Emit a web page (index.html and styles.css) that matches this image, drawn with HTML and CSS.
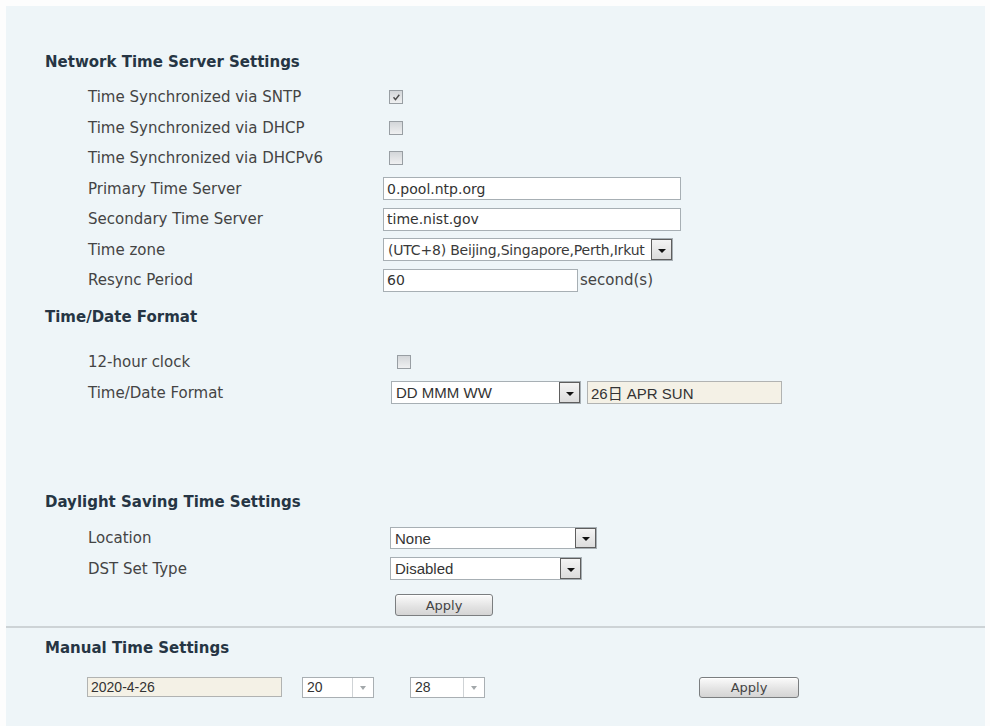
FILE: index.html
```html
<!DOCTYPE html>
<html>
<head>
<meta charset="utf-8">
<title>Time &amp; Date</title>
<link rel="stylesheet" href="styles.css">
</head>
<body>
<div class="panel">
  <section class="sec sec-ntp">
    <h2 class="sec-title">Network Time Server Settings</h2>
    <div class="row">
      <span class="label">Time Synchronized via SNTP</span>
      <span class="cb cb-ntp"><svg viewBox="0 0 13 13" width="11" height="11"><path d="M3 6.2 L5.3 9 L9.8 3.2" fill="none" stroke="#4a4a4a" stroke-width="1.7"/></svg></span>
    </div>
    <div class="row">
      <span class="label">Time Synchronized via DHCP</span>
      <span class="cb cb-ntp"></span>
    </div>
    <div class="row">
      <span class="label">Time Synchronized via DHCPv6</span>
      <span class="cb cb-ntp"></span>
    </div>
    <div class="row">
      <span class="label">Primary Time Server</span>
      <input class="tb tb-wide" type="text" value="0.pool.ntp.org">
    </div>
    <div class="row">
      <span class="label">Secondary Time Server</span>
      <input class="tb tb-wide" type="text" value="time.nist.gov">
    </div>
    <div class="row">
      <span class="label">Time zone</span>
      <div class="sel sel-tz"><span class="sel-val tz-val">(UTC+8) Beijing,Singapore,Perth,Irkut</span><span class="arr"><i class="tri"></i></span></div>
    </div>
    <div class="row">
      <span class="label">Resync Period</span>
      <input class="tb tb-mid" type="text" value="60"><span class="unit">second(s)</span>
    </div>
  </section>

  <section class="sec sec-fmt">
    <h2 class="sec-title">Time/Date Format</h2>
    <div class="row">
      <span class="label">12-hour clock</span>
      <span class="cb cb-fmt"></span>
    </div>
    <div class="row">
      <span class="label">Time/Date Format</span>
      <div class="sel sel-fmt"><span class="sel-val narrow">DD MMM WW</span><span class="arr"><i class="tri"></i></span></div>
      <input class="tb tb-ro tb-fmt narrow" type="text" value="26日 APR SUN" readonly>
    </div>
  </section>

  <section class="sec sec-dst">
    <h2 class="sec-title">Daylight Saving Time Settings</h2>
    <div class="row">
      <span class="label">Location</span>
      <div class="sel sel-loc"><span class="sel-val narrow">None</span><span class="arr"><i class="tri"></i></span></div>
    </div>
    <div class="row">
      <span class="label">DST Set Type</span>
      <div class="sel sel-dst"><span class="sel-val narrow">Disabled</span><span class="arr"><i class="tri"></i></span></div>
    </div>
    <div class="row-btn">
      <button class="btn btn-dst" type="button">Apply</button>
    </div>
  </section>

  <div class="divider"></div>

  <section class="sec sec-man">
    <h2 class="sec-title">Manual Time Settings</h2>
    <div class="row-man">
      <input class="tb tb-ro tb-date narrow" type="text" value="2020-4-26" readonly>
      <div class="msel msel-h"><span class="sel-val narrow">20</span><span class="marr"><i class="mtri"></i></span></div>
      <div class="msel msel-m"><span class="sel-val narrow">28</span><span class="marr"><i class="mtri"></i></span></div>
      <button class="btn btn-man" type="button">Apply</button>
    </div>
  </section>
</div>
</body>
</html>
```

FILE: styles.css
```css
* { box-sizing: border-box; }

html, body {
  margin: 0;
  padding: 0;
  background: #fdfdfd;
}

body {
  font-family: "DejaVu Sans", "Noto Sans CJK SC", sans-serif;
  color: #3c3c3c;
  height: 726px;
  overflow: hidden;
}

.panel {
  margin: 6px 5px 0 6px;
  height: 720px;
  background: #eef5f8;
  padding-top: 46px;
}

.sec {
  padding-left: 39px;
}

.sec-title {
  margin: 0;
  font-size: 15px;
  line-height: 20px;
  font-weight: bold;
  color: #263544;
}

.sec-ntp .sec-title { margin-bottom: 10px; }
.sec-fmt { margin-top: 11.5px; }
.sec-fmt .sec-title { margin-bottom: 20px; }
.sec-dst { margin-top: 84px; }
.sec-dst .sec-title { margin-bottom: 11px; }
.sec-man { margin-top: 10px; }
.sec-man .sec-title { margin-bottom: 14px; }

.row {
  display: flex;
  align-items: center;
  height: 30.5px;
  padding-left: 43px;
}

.label {
  flex: none;
  width: 295px;
  font-size: 15px;
  color: #444;
  white-space: nowrap;
}

/* checkbox */
.cb {
  flex: none;
  width: 14px;
  height: 14px;
  border: 1px solid #989ea3;
  background: linear-gradient(#d3d6d9, #eff0f1);
  display: flex;
  align-items: center;
  justify-content: center;
}
.cb-ntp { margin-left: 6px; }
.cb-fmt { margin-left: 14px; }

/* text boxes */
.tb {
  flex: none;
  height: 23px;
  margin: 0;
  border: 1px solid #a7afb4;
  background: #fff;
  font-family: "DejaVu Sans", "Noto Sans CJK SC", sans-serif;
  font-size: 14px;
  color: #333;
  padding: 0 3px;
  outline: none;
}
.tb-wide { width: 298px; }
.tb-mid { width: 195px; }
.tb-ro {
  background: #f4f1e6;
  border-color: #b1b3b2;
}
.tb-fmt {
  width: 195px;
  margin-left: 6px;
}

.narrow {
  font-family: "Liberation Sans Narrow", "Liberation Sans", "Noto Sans CJK SC", sans-serif;
  font-size: 15px;
  color: #333;
}

.unit {
  margin-left: 2px;
  font-size: 15px;
  color: #444;
}

/* selects */
.sel {
  flex: none;
  display: flex;
  align-items: stretch;
  height: 23px;
  border: 1px solid #a7afb4;
  background: #fff;
  overflow: hidden;
}
.sel-val {
  flex: 1;
  min-width: 0;
  padding-left: 4px;
  white-space: nowrap;
  overflow: hidden;
  display: flex;
  align-items: center;
}
.tz-val {
  font-size: 14px;
  color: #3a3a3a;
  letter-spacing: -0.2px;
}
.arr {
  flex: none;
  width: 21px;
  border: 1px solid #5e5e5e;
  background: linear-gradient(#f4f4f4, #dcdcdc);
  display: flex;
  align-items: center;
  justify-content: center;
}
.tri {
  display: block;
  width: 0;
  height: 0;
  border-left: 4px solid transparent;
  border-right: 4px solid transparent;
  border-top: 4px solid #111;
  margin-top: 2px;
}
.sel-tz { width: 290px; }
.sel-fmt { width: 190px; margin-left: 8px; }
.sel-loc { width: 207px; margin-left: 7px; height: 22px; }
.sel-dst { width: 192px; margin-left: 7px; }

/* buttons */
.btn {
  flex: none;
  height: 22px;
  margin: 0;
  padding: 0;
  border: 1px solid #7b7e80;
  border-radius: 3px;
  background: linear-gradient(#fbfbfb, #e2e2e2 60%, #d4d4d4);
  font-family: "DejaVu Sans", sans-serif;
  font-size: 13px;
  color: #444;
  box-shadow: inset 0 1px 0 #fff;
}

.row-btn {
  padding: 10px 0 10px 43px;
  display: flex;
}
.btn-dst {
  width: 98px;
  margin-left: 307px;
}

.divider {
  height: 2px;
  background: #cdd3d6;
}

/* manual row */
.row-man {
  display: flex;
  align-items: center;
  height: 30px;
  padding-left: 42px;
}
.tb-date {
  width: 195px;
  height: 20px;
  font-size: 14px;
}
.msel {
  flex: none;
  display: flex;
  height: 21px;
  border: 1px solid #a9afb3;
  background: #fff;
}
.msel-h { width: 72px; margin-left: 20px; }
.msel-m { width: 75px; margin-left: 36px; }
.msel .sel-val { font-size: 14px; }
.marr {
  flex: none;
  width: 21px;
  border-left: 1px solid #cfd3d6;
  display: flex;
  align-items: center;
  justify-content: center;
}
.mtri {
  display: block;
  width: 0;
  height: 0;
  border-left: 3px solid transparent;
  border-right: 3px solid transparent;
  border-top: 4px solid #a3a8ab;
  margin-top: 1px;
}
.btn-man {
  width: 100px;
  height: 21px;
  margin-left: 214px;
}
```
